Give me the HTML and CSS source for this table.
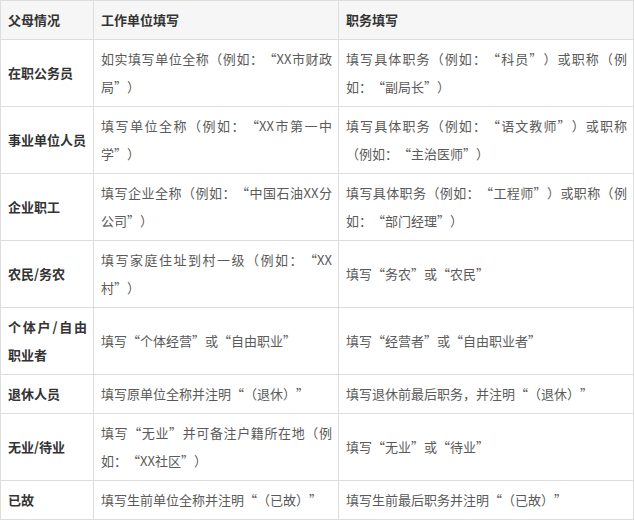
FILE: index.html
```html
<!DOCTYPE html>
<html lang="zh-CN">
<head>
<meta charset="utf-8">
<link rel="stylesheet" href="styles.css">
</head>
<body>
<table class="info">
  <colgroup>
    <col class="c1">
    <col class="c2">
    <col class="c3">
  </colgroup>
  <thead>
    <tr><th>父母情况</th><th>工作单位填写</th><th>职务填写</th></tr>
  </thead>
  <tbody>
    <tr><th>在职公务员</th><td>如实填写单位全称（例如：“XX市财政局”）</td><td>填写具体职务（例如：“科员”）或职称（例如：“副局长”）</td></tr>
    <tr><th>事业单位人员</th><td>填写单位全称（例如：“XX市第一中学”）</td><td>填写具体职务（例如：“语文教师”）或职称（例如：“主治医师”）</td></tr>
    <tr><th>企业职工</th><td>填写企业全称（例如：“中国石油XX分公司”）</td><td>填写具体职务（例如：“工程师”）或职称（例如：“部门经理”）</td></tr>
    <tr><th>农民/务农</th><td>填写家庭住址到村一级（例如：“XX村”）</td><td>填写“务农”或“农民”</td></tr>
    <tr><th>个体户/自由职业者</th><td>填写“个体经营”或“自由职业”</td><td>填写“经营者”或“自由职业者”</td></tr>
    <tr><th>退休人员</th><td>填写原单位全称并注明“（退休）”</td><td>填写退休前最后职务，并注明“（退休）”</td></tr>
    <tr><th>无业/待业</th><td>填写“无业”并可备注户籍所在地（例如：“XX社区”）</td><td>填写“无业”或“待业”</td></tr>
    <tr><th>已故</th><td>填写生前单位全称并注明“（已故）”</td><td>填写生前最后职务并注明“（已故）”</td></tr>
  </tbody>
</table>
</body>
</html>
```

FILE: styles.css
```css
html, body {
  margin: 0;
  padding: 0;
  background: #ffffff;
}

.info {
  border-collapse: collapse;
  table-layout: fixed;
  width: 633px;
  font-family: "Noto Sans CJK SC", "Microsoft YaHei", sans-serif;
  font-size: 13px;
  line-height: 28px;
  color: #5a5a5a;
  text-spacing-trim: space-all;
}

.c1 { width: 93px; }
.c2 { width: 245px; }
.c3 { width: 295px; }

.info th,
.info td {
  border: 1px solid #dddddd;
  padding: 5px 6px 5px 7px;
  text-align: justify;
  text-align-last: left;
  vertical-align: middle;
  word-break: break-all;
}

.info th {
  font-weight: bold;
  color: #333333;
}

.info thead th {
  background: #f6f6f6;
}
```
